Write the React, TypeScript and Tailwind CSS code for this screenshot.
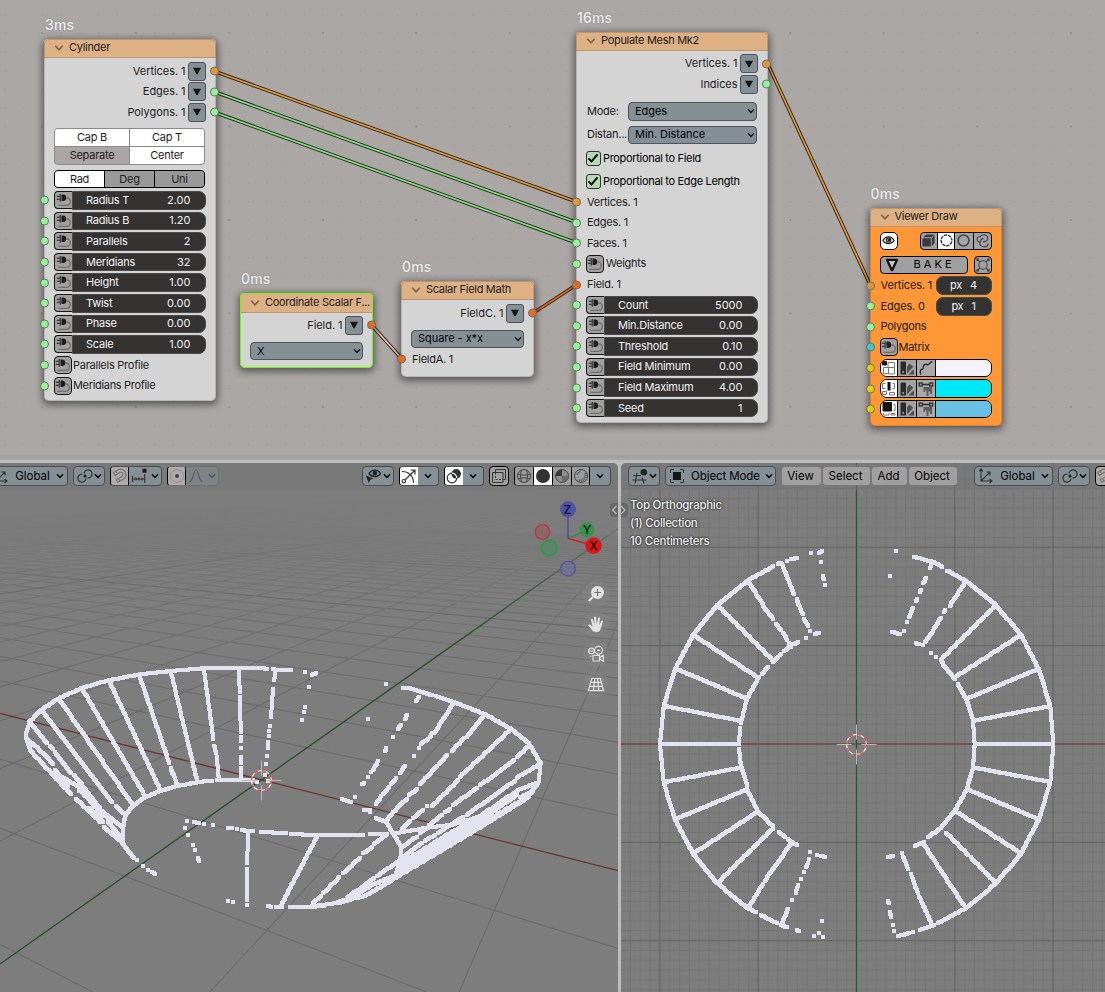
import React from "react";

type Kids = { children?: React.ReactNode };

/* ---------- shared drawings ---------- */

const Caret = ({ className = "" }: { className?: string }) => (
  <svg viewBox="0 0 8 6" className={`h-[6px] w-[8px] shrink-0 ${className}`} fill="none" stroke="currentColor" strokeWidth="1.4">
    <path d="M1 1.2 4 4.4 7 1.2" />
  </svg>
);

const PlugIcon = () => (
  <svg viewBox="0 0 16 16" className="h-[16px] w-[16px]" fill="none">
    <path d="M10.200 6h.8a3.300 3.300 0 0 1 3.300 3.700c-.2 2.300-1.800 3.600-4 3.600H2.300" stroke="#707070" strokeWidth="1.300" />
    <path d="M.8 4.300h3M.8 7.300h3" stroke="#1d1d1d" strokeWidth="1.100" />
    <path d="M4.200 2v7.600" stroke="#1d1d1d" strokeWidth="1" />
    <path d="M5.500 2.600h1.500a3.200 3.200 0 0 1 0 6.400H5.500z" fill="#1d1d1d" />
  </svg>
);

const AxesIcon = () => (
  <svg viewBox="0 0 16 16" className="h-[16px] w-[16px] shrink-0" fill="none" stroke="#333" strokeWidth="1.1">
    <path d="M3 1v12h11M3 13 12 4M1 3.5 3 1l2 2.500M11.500 11 14 13l-2.500 2M8.500 4H12v3.500" />
  </svg>
);

const PivotIcon = () => (
  <svg viewBox="0 0 16 16" className="h-[16px] w-[16px] shrink-0" fill="none" stroke="#333" strokeWidth="1.300">
    <path d="M8.900 10.600A4 4 0 1 1 5.400 6.100M7.100 5.400A4 4 0 1 1 10.600 9.900" />
    <circle cx="8" cy="8" r="1.600" fill="#1d1d1d" stroke="none" />
  </svg>
);

const MagnetIcon = () => (
  <svg viewBox="0 0 16 16" className="h-[16px] w-[16px] shrink-0" fill="none" stroke="#777" strokeWidth="1.2">
    <path d="M1.500 4.500 6 1.700c4-2 9 1.500 8 6-.8 3-4.500 5-8.500 6.500L4.300 11.300c3-1 6-2.600 6.600-4.300.5-1.800-1.200-3.200-3.200-2.500L3.300 7.300zM3.800 3.200l1.700 2.700M6.600 10.400l1.200 2.900" />
  </svg>
);

/* ---------- node pieces ---------- */

const SOCKET: Record<string, string> = {
  green: "bg-[#92f792]",
  amber: "bg-[#e6992f]",
  dullamber: "bg-[#d8953f]",
  field: "bg-[#ea6a1c]",
  cyan: "bg-[#33cccf]",
  yellow: "bg-[#e3ce06]",
};

function Socket({ kind, side }: { kind: string; side: "l" | "r" }) {
  return (
    <span
      className={`absolute top-1/2 h-[9px] w-[9px] -translate-y-1/2 rounded-full border border-[#6d6d6d] ${side === "l" ? "-left-[4px]" : "-right-[3.500px]"} ${SOCKET[kind]}`}
    />
  );
}

function Row({ children, input, output, end }: Kids & { input?: string; output?: string; end?: boolean }) {
  return (
    <div className={`relative flex h-[20.6px] shrink-0 items-center px-[10px] ${end ? "justify-end gap-[2px]" : ""}`}>
      {input && <Socket kind={input} side="l" />}
      {children}
      {output && <Socket kind={output} side="r" />}
    </div>
  );
}

function OutRow({ label, kind }: { label: string; kind: string }) {
  return (
    <Row end output={kind}>
      <span className="tracking-[-0.050px]">{label}</span>
      <span className="flex h-[19px] w-[18px] items-center justify-center rounded-[3px] border border-[#4e5357] bg-[#848f96]">
        <svg viewBox="0 0 8 8" className="h-[8px] w-[8px]"><path d="M0 .8h8L4.600 7.200H3.400z" fill="#171717" /></svg>
      </span>
    </Row>
  );
}

function PlugButton({ round = true }: { round?: boolean }) {
  return (
    <span className={`flex h-[18px] w-[18px] shrink-0 items-center justify-center border border-[#151515] bg-[#a0a0a0] ${round ? "rounded-[4px]" : "rounded-l-[4px] border-r-0"}`}>
      <PlugIcon />
    </span>
  );
}

function Field({ label, value }: { label: string; value: string }) {
  return (
    <Row input="green">
      <div className="flex h-[18.600px] w-full">
        <PlugButton round={false} />
        <div className="flex flex-1 items-center justify-between rounded-r-[7px] border border-[#4b4b4b] bg-[#343332] pl-[13px] pr-[14px] text-[#f2f2f2]">
          <span>{label}</span>
          <span className="tracking-normal">{value}</span>
        </div>
      </div>
    </Row>
  );
}

function Select({ children, className = "" }: Kids & { className?: string }) {
  return (
    <div className={`flex h-[18.500px] items-center justify-between rounded-[4px] border border-[#4e5357] bg-[#848f96] pl-[6px] pr-[1px] tracking-[-0.050px] text-black ${className}`}>
      <span>{children}</span>
      <Caret className="text-[#151515]" />
    </div>
  );
}

function Node({ title, time, place, children, orange, selected }: Kids & { title: string; time: string; place: string; orange?: boolean; selected?: boolean }) {
  return (
    <div className={`absolute flex flex-col ${place}`}>
      <div className={`h-[23px] shrink-0 pl-[1px] text-[14px] leading-[18px] font-medium tracking-[0.150px] text-[#ececec] [text-shadow:0_0_2px_#888]`}>{time}</div>
      <div className={`flex flex-1 flex-col rounded-[5px] shadow-[0_2px_7px_2px_rgba(0,0,0,0.45)] ${orange ? "bg-[#ff9736]" : "bg-[#d4d4d4]"} ${selected ? "outline-[1.500px] -outline-offset-1 outline-[#66ff00]" : "outline-1 -outline-offset-1 outline-black/15"}`}>
        <div className={`flex shrink-0 items-center gap-[5px] rounded-t-[4px] border-b border-black/15 bg-[#deb185] pl-[10px] text-[#1c1c1c] ${selected ? "h-[20px]" : "h-[19px]"}`}>
          <Caret className="h-[8px] w-[10px] text-[#7b634c]" />
          <span className="pb-[1px] tracking-[-0.300px] whitespace-nowrap">{title}</span>
        </div>
        {children}
      </div>
    </div>
  );
}

function Check({ children }: Kids) {
  return (
    <div className="flex h-[15px] items-center gap-[2.500px] px-[9.500px] text-black">
      <span className="flex h-[15px] w-[15px] items-center justify-center rounded-[3px] border border-[#2d332d] bg-[#b3dbb3]">
        <svg viewBox="0 0 12 12" className="h-[12px] w-[12px]" fill="none" stroke="#000" strokeWidth="1.900"><path d="M1.500 6.300 4.600 9.400 10.500 2.300" /></svg>
      </span>
      <span className="tracking-[-0.320px]">{children}</span>
    </div>
  );
}

const PaletteIcon = () => (
  <svg viewBox="0 0 16 16" className="h-[16px] w-[16px] shrink-0" fill="#2b2b2b">
    <path d="M2.500 1.500h3.500a1 1 0 0 1 1 1v12H1.500v-12a1 1 0 0 1 1-1z" />
    <path d="M8 6.500 10.500 3.500l3.800 3.200L8 13.500zM9.500 14.500l4.700-4.700h.8v4.700z" fill="#505050" />
    <circle cx="4.200" cy="12" r="1" fill="#a3a3a3" />
  </svg>
);
const CurveIcon = () => (
  <svg viewBox="0 0 16 16" className="h-[16px] w-[16px] shrink-0" fill="none" stroke="#2b2b2b" strokeWidth="1.400">
    <path d="M2.200 14.500c1.200-1.500-.8-2.200.3-4S5 9.800 5.200 8s-.4-2.700 1.600-3.500 2.200.8 3.700 0S12 2.300 14.500 1.500" />
  </svg>
);
const PolyIcon = () => (
  <svg viewBox="0 0 16 16" className="h-[16px] w-[16px] shrink-0" fill="none" stroke="#2b2b2b" strokeWidth="1.300">
    <path d="M5.500 6h8.500v7h-2v-2.500h-1.500V15H8.500V9.500H7V11H5.500z" fill="#5c5c5c" stroke="none" />
    <path d="M4 3.500h8" />
    <rect x="1.200" y="2" width="3" height="3" fill="#aaa" /><rect x="11.700" y="2" width="3" height="3" fill="#aaa" />
  </svg>
);

function ColorRow({ first, last, color }: { first: React.ReactNode; last: React.ReactNode; color: string }) {
  return (
    <Row input="yellow">
      <div className="flex h-[18.500px] w-full overflow-hidden rounded-[7px] border border-black">
        <span className="flex w-[16px] items-center justify-center bg-white">{first}</span>
        <span className="flex w-[19px] items-center justify-center border-l border-black bg-[#a3a3a3]"><PaletteIcon /></span>
        <span className="flex w-[19px] items-center justify-center border-l border-black bg-[#a9a9a9]">{last}</span>
        <span className={`flex-1 border-l border-black ${color}`} />
      </div>
    </Row>
  );
}

/* ---------- point clouds ---------- */

/* Strokes are separated by ";" and given in thirds of a pixel. */
function cloud(src: string, ox: number, oy: number): string {
  const seen = new Set<string>();
  src.split(";").forEach((stroke) => {
    const pts = stroke.trim().split(/\s+/).filter(Boolean).map((p) => p.split(",").map(Number));
    if (!pts.length) return;
    const put = (x: number, y: number) => seen.add(`M${Math.round(ox + x / 3) - 2} ${Math.round(oy + y / 3) - 2}h4v4h-4z`);
    put(pts[0][0], pts[0][1]);
    for (let i = 1; i < pts.length; i++) {
      const [ax, ay] = pts[i - 1];
      const [bx, by] = pts[i];
      const n = Math.max(1, Math.ceil(Math.hypot(bx - ax, by - ay) / 5));
      for (let k = 1; k <= n; k++) put(ax + ((bx - ax) * k) / n, ay + ((by - ay) * k) / n);
    }
  });
  return [...seen].join("");
}

const TOP_VIEW = `460,109 382,152 292,226 219,315 165,417 131,528 120,643 131,758 165,869 219,971 292,1060 382,1134 408,1147;422,1155 470,1179;484,1186 500,1191;531,1200 537,1203;582,1217;597,1209;609,1220;606,1173;
473,101 484,98;502,93;513,88 530,84;573,69;597,69 606,63;603,96;609,138 611,147;615,165;
120,643 357,643;135,528 363,573;170,417 381,506;222,316 414,443;294,228 460,392;385,155 428,222;430,228 460,266;468,283 483,299;489,309 502,329;506,338 514,350;
535,337 520,343;508,352 493,363;482,373 458,397;443,410 426,432;417,441 381,506 363,578;360,593 357,643;357,657 363,709 381,766;381,778 414,845 458,888 458,896;478,907 494,920;503,928 516,937 530,945;558,323;570,302;584,312 596,309;
484,98 522,192;530,207 548,253;553,268 565,289;
135,756 361,713;170,866 381,778;222,969 414,845;295,1056 458,896;386,1132 428,1063;434,1053 516,937;570,966;568,987;563,1000 558,1012;552,1026;543,1047;534,1064 528,1088;516,1111;504,1137 484,1184;591,974;604,977 615,981;
882,80 946,98 966,111;982,122 1038,153 1128,226 1203,315 1256,417 1291,528 1300,643 1291,758 1256,869 1203,971 1128,1060 1038,1134 954,1179;942,1186 900,1199;879,1206;868,1209 834,1218;822,1203;819,1185;813,1160 809,1145;806,1120 803,1114;828,63;810,138;
935,100 930,114;918,143 910,160;902,180 900,187;892,207 888,213;879,234 868,262;861,276;852,302;840,312 816,305;
1036,156 989,228;975,240 973,246;962,263 943,295;938,304 915,336;909,345;896,342 888,339;933,369;948,381;
1125,228 962,389;1200,317 1006,441;1252,418 1044,504;1286,529 1063,572;1300,643 1064,643;1286,755 1063,713;1252,866 1044,779;1200,968 1009,845;1125,1057 1052,982;1045,975 978,908;1034,1130 909,940;936,1184 898,1100;893,1088 876,1042;873,1032;864,1016 849,980;846,969;819,977 805,982;
964,389 970,404 1006,447;1013,461 1040,510 1059,572 1064,643 1059,713 1040,779 1003,845 962,893 925,922;912,936 884,948`;

const PERSP_LEFT = `800,86 770,84 612,85 512,93 420,103 326,121 248,143 175,176 120,212 88,246 77,288 92,333;819,86 830,90;843,90;856,90 873,90;915,96;936,105 948,99;927,141;915,201;912,216;906,240;
612,90 640,297;643,317 648,340;650,350 656,415;716,92 718,132;720,141 720,156;720,170;720,183 720,237;723,249 723,264;723,277;723,290 723,302;723,324;723,350 723,370;723,384 723,407;
825,90 823,120;819,147 815,204;814,215 812,232;810,257;807,273;807,288;803,307 803,325;801,348;798,372;795,405;
512,93 592,425;418,106 508,370;513,384 518,402;520,400 532,436;328,124 482,452;248,148 435,468;178,178 395,490;125,212 337,487;347,497 377,525;90,246 140,310;150,318 160,328;166,337 214,400;222,406 246,432;250,440 300,505;305,512 370,565;
84,300 128,338 158,372;92,333 213,463;165,390 205,437;172,403 236,440;238,452 262,460;228,476 300,545;250,460 285,500;290,510 325,535;270,505 310,545;311,562 358,600;325,545 370,600;
602,425 636,423;652,420 760,420;770,425;803,422;602,425 532,438 484,452 435,472 395,500 376,527 368,570 370,602;350,585 402,655;411,660;429,678;444,690;457,697 465,703;
561,543;555,564;564,585;579,615;585,630;593,653 597,663;582,546 597,549;612,552;639,555;684,564 696,564;711,567;726,571 760,573;782,576 858,579;874,582 906,582;908,585 952,586;963,585 978,585;
744,575 744,630;741,640 741,670;741,688 741,780;741,795;952,588 840,802;684,783;699,786;803,798 812,800;828,801 845,801;870,801 903,801;915,801 940,799 990,792`;

const PERSP_RIGHT = `258,372;204,477;310,384 325,384 396,406;408,409 462,426 555,463 630,505 686,549 722,610 715,668 680,715;357,411 348,423;321,465 315,477;303,495 293,508;279,531;258,564 255,573;234,604 219,631;213,636;204,651;192,670 186,673;165,711;
126,718 153,727;193,750 210,750 211,756;228,774 258,786 303,858 303,885 288,945;
462,428 402,520;396,520 390,531;385,537 363,551;358,565;342,587;315,617 300,638;288,655 273,673;267,682 250,702;244,709 228,731;
553,466 500,530;492,533 456,573;442,585 360,673;352,686 328,706;320,716 285,752;278,757 258,783;
630,510 545,590 480,650;475,660 430,705;424,712 395,737;380,739;368,751 340,775;330,782 305,808;
686,558 650,592;643,601 540,676;530,685 460,734;450,748 436,756;425,766 388,796;380,803 360,820;350,830 305,862;
715,615 650,653;645,662 500,765;490,770 415,818;405,825 375,842;365,850 305,893;
712,668 655,690 545,765 435,828 300,912;650,705 545,778 435,842 300,925;690,700 670,718 560,782 440,852 300,935;680,715 560,790 440,862 300,945 235,985 195,1008 165,1015;
712,676 690,698 660,712;
40,825 80,825;92,825 190,825;210,822 262,822;282,820 390,802 450,795 545,768;
258,825 222,852;216,861 190,880;180,893 130,940;118,952 70,1000;62,1008 40,1030;300,900 232,948;222,955 140,1014;288,945 215,975 150,1015 115,1025;
0,1041 30,1041 75,1036;88,1032 125,1027 155,1018`;

const VPX = [-885, 488];
const VPY = [676, 488];

function Cursor({ x, y }: { x: number; y: number }) {
  return (
    <g fill="none">
      <path d={`M${x} ${y - 20}v15m0 10v15M${x - 20} ${y}h15m10 0h15`} stroke="#b9b9b9" strokeWidth="1" />
      <circle cx={x} cy={y} r="10" stroke="#f4f4f4" strokeWidth="1.200" />
      <circle cx={x} cy={y} r="10" stroke="#f23b34" strokeWidth="1.200" strokeDasharray="3.930 3.930" />
    </g>
  );
}

function PerspectiveScene() {
  const xs = Array.from({ length: 46 }, (_, i) => i - 4);
  const ys = Array.from({ length: 70 }, (_, i) => i - 44);
  return (
    <svg viewBox="0 463 618 529" className="absolute inset-0 h-full w-full">
      <defs>
        <linearGradient id="fade" x1="0" y1="490" x2="0" y2="700" gradientUnits="userSpaceOnUse">
          <stop offset="0" stopColor="#fff" stopOpacity="0" />
          <stop offset="0.2" stopColor="#fff" stopOpacity="0.120" />
          <stop offset="0.5" stopColor="#fff" stopOpacity="0.500" />
          <stop offset="1" stopColor="#fff" stopOpacity="0.900" />
        </linearGradient>
        <linearGradient id="axisfade" x1="0" y1="490" x2="0" y2="640" gradientUnits="userSpaceOnUse">
          <stop offset="0" stopColor="#fff" stopOpacity="0" />
          <stop offset="1" stopColor="#fff" stopOpacity="1" />
        </linearGradient>
        <mask id="far" maskUnits="userSpaceOnUse" x="0" y="463" width="618" height="529">
          <rect x="0" y="463" width="618" height="529" fill="url(#fade)" />
        </mask>
        <mask id="axes" maskUnits="userSpaceOnUse" x="0" y="463" width="618" height="529">
          <rect x="0" y="463" width="618" height="529" fill="url(#axisfade)" />
        </mask>
      </defs>
      <g mask="url(#far)" fill="none">
        {xs.filter((m) => m !== 0).map((m) => (
          <path key={`x${m}`} d={`M${VPX[0]} ${VPX[1]}L${1094.700 + 334 * m} 992`} stroke={m % 10 === 0 ? "#5c5c5c" : "#6a6a6a"} strokeWidth="1.200" />
        ))}
        {ys.filter((n) => n !== 0).map((n) => (
          <path key={`y${n}`} d={`M${VPY[0]} ${VPY[1]}L${-39.500 + 249.300 * n} 992`} stroke={n % 10 === 0 ? "#5c5c5c" : "#6a6a6a"} strokeWidth="1.200" />
        ))}
      </g>
      <g mask="url(#axes)">
        <path d="M0 713.300 618 870.600" stroke="#6c3131" strokeWidth="1.300" />
        <path d="M0 964 618 528.700" stroke="#2b5030" strokeWidth="1.400" />
      </g>
      <path d={cloud(PERSP_LEFT, 0, 640) + cloud(PERSP_RIGHT, 300, 560)} fill="#e4e3f1" fillRule="nonzero" shapeRendering="crispEdges" />
      <Cursor x={261.500} y={780.500} />
      <g strokeWidth="1.300">
        <path d="M568 538.500v-29" stroke="#4d4fa6" strokeWidth="1.600" />
        <path d="M568 538.500 587 530" stroke="#36894a" strokeWidth="1.600" />
        <path d="M568 538.500 593 545.500" stroke="#dc1c1e" strokeWidth="1.600" />
        <circle cx="542.500" cy="532" r="7.300" fill="#8d6667" stroke="#ba3838" />
        <circle cx="549" cy="548" r="7.800" fill="#5f8467" stroke="#1ca23a" />
        <circle cx="568" cy="568.700" r="7.300" fill="#71738d" stroke="#5355a4" />
        <circle cx="568" cy="509.300" r="8" fill="#5053a5" />
        <circle cx="587" cy="529.800" r="7.500" fill="#3a914d" />
        <circle cx="593.500" cy="545.800" r="8.200" fill="#dc1517" />
      </g>
      <g fontFamily="Inter, sans-serif" fontSize="12" fontWeight="600" textAnchor="middle">
        <text x="567.500" y="513.500" fill="#15163c">Z</text>
        <text x="587" y="534" fill="#0f3518">Y</text>
        <text x="593.500" y="550.200" fill="#2d0404">X</text>
      </g>
      <g fill="#8a8a8a" fillOpacity="0.300">
        <circle cx="596" cy="594" r="13" /><circle cx="596" cy="624" r="13" /><circle cx="596" cy="654" r="13" /><circle cx="596" cy="684.500" r="13" />
      </g>
      <g fill="none" stroke="#e2e2e2" strokeWidth="1.200">
        <circle cx="597.500" cy="592.500" r="6.500" fill="#e2e2e2" stroke="none" />
        <path d="m593 597-4.300 4" strokeWidth="2.200" />
        <path d="M597.500 589v7M594 592.500h7" stroke="#777" />
        <path d="M592.700 631c-1.300-2-3.200-3.700-4.500-5.700.9-1.300 2.200-.8 3.400.6l1 .9-1.700-7.300c.6-1.300 1.700-1 2 .1l1.600 5-.5-7.400c.6-1 1.700-1 2 0l.8 7.200 1.300-6.700c.7-.9 1.700-.6 1.800.4l-.6 7.400 2.100-4.700c.8-.6 1.600-.2 1.500.8-1 3.400-1.700 6.900-3.200 9.400-1.700 1.600-5.200 1.600-7 0z" fill="#e2e2e2" stroke="none" />
        <circle cx="591.500" cy="651" r="2.900" /><circle cx="598.500" cy="650.300" r="3.900" />
        <path d="M589 651h2.500v0h2M597 650.300h3M589.800 656.500h1.500M593 655.500h6.500v5.500H593zM603.300 655.300v6l-3.300-2.100v-1.800z" />
        <path d="M591.800 678.500h8.600l3.100 12.200h-15zM590.700 682.400h10.900M589.800 686.400h12.800M594.700 678.500l-1.300 12.200M597.600 678.500l1.200 12.200" />
      </g>
      <path d="M610 507a4 4 0 0 1 4-4h5v14h-5a4 4 0 0 1-4-4z" fill="#686868" />
      <path d="m616.500 506-4 4 4 4" fill="none" stroke="#bcbcbc" strokeWidth="1.200" />
    </svg>
  );
}

function TopScene() {
  const lines = Array.from({ length: 60 }, (_, i) => i - 30);
  return (
    <svg viewBox="621 463 484 529" className="absolute inset-0 h-full w-full">
      {lines.filter((i) => i % 10 !== 0).map((i) => (
        <path key={i} d={`M${856.500 + i * 9.830} 463V992M621 ${744 + i * 9.830}H1105`} stroke="#767676" strokeWidth="1" />
      ))}
      {[-3, -2, -1, 1, 2, 3].map((i) => (
        <path key={i} d={`M${856.500 + i * 98.300} 463V992M621 ${744 + i * 98.300}H1105`} stroke="#676767" strokeWidth="1.200" />
      ))}
      <path d="M621 744H1105" stroke="#724747" strokeWidth="1.600" />
      <path d="M856.500 463V992" stroke="#2d5434" strokeWidth="1.300" />
      <path d={cloud(TOP_VIEW, 620, 530)} fill="#e4e3f1" fillRule="nonzero" shapeRendering="crispEdges" />
      <Cursor x={856.500} y={744.500} />
      <path d="M621 503h3a4 4 0 0 1 4 4v6a4 4 0 0 1-4 4h-3z" fill="#686868" />
      <path d="m621 506 4 4-4 4" fill="none" stroke="#bcbcbc" strokeWidth="1.200" />
    </svg>
  );
}

/* ---------- viewport header pieces ---------- */

function Box({ children, className = "" }: Kids & { className?: string }) {
  return <div className={`flex h-[20px] shrink-0 items-center overflow-hidden rounded-[4px] border border-[#494e52] bg-[#848f96] ${className}`}>{children}</div>;
}
const Cell = ({ children, className = "" }: Kids & { className?: string }) => (
  <span className={`flex h-full shrink-0 items-center justify-center ${className}`}>{children}</span>
);
const Plain = ({ children, className = "" }: Kids & { className?: string }) => (
  <span className={`flex h-[18px] shrink-0 items-center justify-center rounded-[3px] bg-[#a0a0a0] pt-[1px] pr-[1px] text-black ${className}`}>{children}</span>
);

function LeftHeader() {
  return (
    <div className="relative flex h-[27px] items-start bg-[#777]/60 pt-[3px] text-[11.500px] text-black">
      <Box className="-ml-[8px] w-[76px] justify-between pr-[3px]"><AxesIcon /><span className="pt-[1px]">Global</span><Caret /></Box>
      <Box className="ml-[5px] w-[32px] justify-between pl-[3px] pr-[2px]"><PivotIcon /><Caret /></Box>
      <Box className="ml-[5px] w-[52px] !border-l-black">
        <Cell className="w-[18px] border-r border-black bg-[#b0abab]"><MagnetIcon /></Cell>
        <Cell className="flex-1 gap-[4px]">
          <svg viewBox="0 0 16 16" className="h-[16px] w-[16px]" fill="none" stroke="#333" strokeWidth="1.200"><path d="M1.500 8v6M1.500 11h12M5 9.500v3M8 9.500v3M11 9.500v3M13.700 6v9" /><path d="M11.500.8h4v4h-4z" fill="#1d1d1d" stroke="none" /></svg>
          <Caret />
        </Cell>
      </Box>
      <Box className="ml-[5px] w-[52px] !border-[#6b7073] !border-l-black !bg-[#7d8488]">
        <Cell className="w-[18px] border-r border-black bg-[#b0abab]">
          <svg viewBox="0 0 16 16" className="h-[16px] w-[16px]"><circle cx="8" cy="8" r="6.500" fill="none" stroke="#8f8b8b" /><circle cx="8" cy="8" r="2" fill="#444" /></svg>
        </Cell>
        <Cell className="flex-1 gap-[4px] text-[#4b4f52]">
          <svg viewBox="0 0 16 16" className="h-[16px] w-[16px]" fill="none" stroke="#5a5f62" strokeWidth="1.200"><path d="M1.500 14C5.500 13 5.500 2 8 2s2.500 11 6.500 12" /></svg>
          <Caret />
        </Cell>
      </Box>
      <Box className="ml-[143px] w-[32px] justify-between pl-[2px] pr-[2px]">
        <svg viewBox="0 0 16 16" className="h-[16px] w-[16px]" fill="none"><path d="M4 5.500C7 1 13 1 15.500 5.500 13 9.500 7 9.500 4 5.500z" stroke="#222" strokeWidth="1.300" /><circle cx="9.800" cy="5" r="2.300" fill="#222" /><path d="m.8 7.500 7.500 3-3 1.200-1.500 3.300z" fill="#222" /></svg>
        <Caret />
      </Box>
      <Box className="ml-[5px] w-[40px] !border-l-black">
        <Cell className="w-[18px] bg-white"><svg viewBox="0 0 16 16" className="h-[16px] w-[16px]" fill="none" stroke="#333" strokeWidth="1.200"><path d="M2.500 13.500 13.500 2.500M9.500 2h4.500v4.500M1 3.500C8 3.500 12.500 8 12.500 15" /><circle cx="2.800" cy="13.200" r="1.700" fill="#fff" /></svg></Cell>
        <Cell className="flex-1"><Caret /></Cell>
      </Box>
      <Box className="ml-[5px] w-[40px] !border-l-black">
        <Cell className="w-[18px] bg-white"><svg viewBox="0 0 16 16" className="h-[16px] w-[16px]" fill="none"><circle cx="6" cy="10" r="4.800" stroke="#333" strokeWidth="1.200" /><circle cx="10.200" cy="5.800" r="4.800" fill="#333" /><path d="M6 5.200a4.800 4.800 0 0 1 4.800 4.800" stroke="#fff" strokeWidth="1.200" /></svg></Cell>
        <Cell className="flex-1"><Caret /></Cell>
      </Box>
      <Box className="ml-[5px] w-[20px] justify-center !border-black !bg-[#a0a0a0]">
        <svg viewBox="0 0 16 16" className="h-[16px] w-[16px]" fill="none" stroke="#333"><path d="M1.500 4.500h10.500v10H1.500zM4.500 4V1.500h10v10H12" /><path d="M4.500 4.500v7H12" strokeDasharray="2 1.500" /></svg>
      </Box>
      <Box className="ml-[5px] w-[97px] !border-l-black">
        <Cell className="w-[18px] bg-[#9c9c9c]"><svg viewBox="0 0 16 16" className="h-[16px] w-[16px]" fill="none" stroke="#444"><circle cx="8" cy="8" r="6.500" /><path d="M1.500 6c4 1.500 9 1.500 13 0M2 11c4-1.500 8-1.500 12 0M5.500 2c-1.300 4-1.300 8 0 12M10.500 2c1.300 4 1.300 8 0 12" /></svg></Cell>
        <Cell className="w-[19px] border-l border-black bg-white"><svg viewBox="0 0 16 16" className="h-[16px] w-[16px]"><circle cx="8" cy="8" r="7" fill="#333" /></svg></Cell>
        <Cell className="w-[19px] border-l border-black bg-[#9c9c9c]"><svg viewBox="0 0 16 16" className="h-[16px] w-[16px]"><circle cx="8" cy="8" r="6.500" fill="#8e8e8e" stroke="#444" /><path d="M8 8V1.500A6.500 6.500 0 0 0 1.500 8z" fill="#3b3b3b" /><path d="M8 8v6.500A6.500 6.500 0 0 0 14.500 8z" fill="#6a6a6a" /></svg></Cell>
        <Cell className="w-[19px] border-x border-black bg-[#9c9c9c]"><svg viewBox="0 0 16 16" className="h-[16px] w-[16px]" fill="none" stroke="#444"><circle cx="8" cy="8" r="6.500" /><path d="M4 7c.3-2 1.500-3 3.500-3.300" /><path d="M12.500 5c1 5-3 8.500-8 7.500" strokeWidth="2.500" stroke="#555" strokeDasharray="1 .8" /></svg></Cell>
        <Cell className="flex-1"><Caret /></Cell>
      </Box>
    </div>
  );
}

function RightHeader() {
  return (
    <div className="relative flex h-[27px] items-start bg-[#777]/60 pt-[3px] text-[11.500px] text-black">
      <Box className="ml-[7px] w-[32px] justify-between pl-[3px] pr-[2px]">
        <svg viewBox="0 0 16 16" className="h-[16px] w-[16px]" fill="none" stroke="#333" strokeWidth="1.200"><path d="M1 7.500h8M.5 12h14M5 5 3 15.500M10 9.500l2 6" /><circle cx="11.800" cy="4.200" r="3.300" fill="#222" stroke="none" /></svg>
        <Caret />
      </Box>
      <Box className="ml-[5px] w-[111px] justify-between pl-[3px] pr-[2px]">
        <svg viewBox="0 0 16 16" className="h-[16px] w-[16px]" fill="none" stroke="#333"><path d="M4 4h8v8H4z" fill="#151515" stroke="none" /><path d="M1.500 5V1.500H5M11 1.500h3.500V5M14.500 11v3.500H11M5 14.500H1.500V11" /></svg>
        <span className="pt-[1px] pl-[1px] tracking-[-0.100px]">Object Mode</span><Caret />
      </Box>
      <div className="ml-[5.500px] flex gap-[2px] pt-[1px]">
        <Plain className="w-[39px]">View</Plain><Plain className="w-[47px]">Select</Plain><Plain className="w-[35px]">Add</Plain><Plain className="w-[48px]">Object</Plain>
      </div>
      <Box className="ml-[17.500px] w-[79px] justify-between pl-[3px] pr-[3px]"><AxesIcon /><span className="pt-[1px]">Global</span><Caret /></Box>
      <Box className="ml-[5px] w-[32px] justify-between pl-[3px] pr-[2px]"><PivotIcon /><Caret /></Box>
      <Box className="ml-[5px] w-[52px] !border-black !bg-[#b0abab]"><MagnetIcon /></Box>
    </div>
  );
}

/* ---------- node editor ---------- */

const LINKS: [string, string][] = [
  ["M215 71.500 577 202", "#e6992f"],
  ["M215 92 577 222.500", "#7fe87f"],
  ["M215 112.500 577 243", "#7fe87f"],
  ["M767.500 63.500 870.500 285.500", "#e6992f"],
  ["M532.500 313.500 577 284.500", "#e0621c"],
  ["M372 325.500 402 359", "#f2c3ab"],
];

function NodeCanvas() {
  return (
    <div className="relative h-[455px] shrink-0 overflow-hidden bg-[#aba7a5] text-[11px] leading-none tracking-[-0.250px] text-[#1c1c1c]">
      <svg className="absolute inset-0 h-full w-full" viewBox="0 0 1105 455">
        <defs>
          <pattern id="minor" x="4.700" y="-4.700" width="18.700" height="18.700" patternUnits="userSpaceOnUse"><rect x="0" y="0" width="1.200" height="1.200" fill="#9e9996" /></pattern>
          <pattern id="major" x="41.300" y="32" width="93.500" height="93.500" patternUnits="userSpaceOnUse"><rect width="1.800" height="1.800" fill="#918c8a" /></pattern>
        </defs>
        <rect width="1105" height="455" fill="url(#minor)" />
        <rect width="1105" height="455" fill="url(#major)" />
        {LINKS.map(([d, c]) => (
          <g key={d}><path d={d} stroke="#2f2a26" strokeWidth="3.600" /><path d={d} stroke={c} strokeWidth="1.700" /></g>
        ))}
      </svg>

      <Node title="Cylinder" time="3ms" place="left-[44px] top-[16px] h-[384.500px] w-[171.500px]">
        <div className="flex flex-col pt-[3px]">
          <OutRow label="Vertices. 1" kind="amber" /><OutRow label="Edges. 1" kind="green" /><OutRow label="Polygons. 1" kind="green" />
          <div className="mx-[10px] mt-[5.200px] grid h-[37.500px] w-[151px] grid-cols-2 grid-rows-2 gap-px overflow-hidden rounded-[4px] border border-[#8a8a8a] bg-[#8a8a8a] text-center leading-[17px]">
            <span className="bg-white">Cap B</span><span className="bg-white">Cap T</span><span className="bg-[#aba5a5]">Separate</span><span className="bg-white">Center</span>
          </div>
          <div className="mx-[10px] mt-[5px] mb-[1.500px] grid h-[18px] w-[151px] grid-cols-3 gap-px overflow-hidden rounded-[4px] border border-black bg-black text-center leading-[16px]">
            <span className="bg-white">Rad</span><span className="bg-[#999]">Deg</span><span className="bg-[#999]">Uni</span>
          </div>
          <Field label="Radius T" value="2.00" /><Field label="Radius B" value="1.20" /><Field label="Parallels" value="2" /><Field label="Meridians" value="32" />
          <Field label="Height" value="1.00" /><Field label="Twist" value="0.00" /><Field label="Phase" value="0.00" /><Field label="Scale" value="1.00" />
          <Row input="green"><PlugButton /><span className="ml-px">Parallels Profile</span></Row>
          <Row input="green"><PlugButton /><span className="ml-px tracking-[-0.320px]">Meridians Profile</span></Row>
        </div>
      </Node>

      <Node title="Coordinate Scalar F..." time="0ms" place="left-[240px] top-[270px] h-[98px] w-[132.500px]" selected>
        <div className="flex flex-col pt-[2px]">
          <OutRow label="Field. 1" kind="field" />
          <Select className="mx-[10px] mt-[6.500px] !h-[18px]">X</Select>
        </div>
      </Node>

      <Node title="Scalar Field Math" time="0ms" place="left-[401px] top-[258px] h-[118.500px] w-[132.500px]">
        <div className="flex flex-col pt-[3px]">
          <OutRow label="FieldC. 1" kind="field" />
          <Select className="mx-[10px] mt-[6px] mb-[.8px]">Square - x*x</Select>
          <Row input="field"><span className="ml-px">FieldA. 1</span></Row>
        </div>
      </Node>

      <Node title="Populate Mesh Mk2" time="16ms" place="left-[576px] top-[9px] h-[413.500px] w-[191.500px]">
        <div className="flex flex-col pt-[2.500px]">
          <OutRow label="Vertices. 1" kind="amber" /><OutRow label="Indices" kind="green" />
          <div className="mt-[7.500px] flex items-center pl-[11px]"><span className="w-[41px]">Mode:</span><Select className="w-[129px]">Edges</Select></div>
          <div className="mt-[5px] flex items-center pl-[11px]"><span className="w-[41px]">Distan...</span><Select className="w-[129px]">Min. Distance</Select></div>
          <div className="my-[6.500px] flex flex-col gap-[8px]"><Check>Proportional to Field</Check><Check>Proportional to Edge Length</Check></div>
          <div className="-mt-[3.300px] flex flex-col">
            <Row input="amber"><span className="ml-px">Vertices. 1</span></Row><Row input="green"><span className="ml-px">Edges. 1</span></Row><Row input="green"><span className="ml-px">Faces. 1</span></Row>
            <Row input="green"><PlugButton /><span className="ml-[2px]">Weights</span></Row>
            <Row input="field"><span className="ml-px">Field. 1</span></Row>
            <Field label="Count" value="5000" /><Field label="Min.Distance" value="0.00" /><Field label="Threshold" value="0.10" /><Field label="Field Minimum" value="0.00" /><Field label="Field Maximum" value="4.00" /><Field label="Seed" value="1" />
          </div>
        </div>
      </Node>

      <Node title="Viewer Draw" time="0ms" place="left-[869.500px] top-[184.500px] h-[241px] w-[132px]" orange>
        <div className="flex flex-col pt-[5px]">
          <div className="flex justify-between px-[10px]">
            <span className="flex h-[18.500px] w-[18px] items-center justify-center rounded-[5px] border border-black bg-white">
              <svg viewBox="0 0 16 16" className="h-[15px] w-[15px]" fill="none" stroke="#222" strokeWidth="1.300"><path d="M2 8c3-5.300 9-5.300 12 0-3 4.500-9 4.500-12 0z" /><circle cx="8" cy="7.500" r="2.300" /><circle cx="8.300" cy="7.500" r=".8" fill="#222" /></svg>
            </span>
            <div className="flex h-[18.500px] w-[72px] overflow-hidden rounded-[4px] border border-black bg-[#a3a3a3]">
              <span className="flex w-[17px] items-center justify-center"><svg viewBox="0 0 16 16" className="h-[15px] w-[15px]" fill="#3a3a3a"><path d="M1.500 5.500h9v9h-9zM2.500 4.500l3-3h9l-3 3zM11.500 5.500l3-3V11l-3 3z" /></svg></span>
              <span className="flex w-[18px] items-center justify-center border-x border-black bg-white"><svg viewBox="0 0 16 16" className="h-[15px] w-[15px] shrink-0" fill="none" stroke="#333" strokeWidth="1.500"><circle cx="8" cy="8" r="5.800" /><circle cx="8" cy="8" r="5.800" stroke="#fff" strokeDasharray="1 3.555" strokeWidth="2.500" /></svg></span>
              <span className="flex w-[18px] items-center justify-center"><svg viewBox="0 0 16 16" className="h-[15px] w-[15px]" fill="none" stroke="#444" strokeWidth="1.700"><circle cx="8" cy="8" r="5.800" /></svg></span>
              <span className="flex w-[18px] items-center justify-center border-l border-black"><svg viewBox="0 0 16 16" className="h-[15px] w-[15px]" fill="none" stroke="#444" strokeWidth="1.200"><path d="M6 9.500H4a3 3 0 0 1 0-5.500h1.500C7 1 12.500 1 13.500 4.500S11 9.500 8.500 9.500M6 9.500c0-2.500 1-3.500 3-3.500M6.500 13.500c3 2.500 8 1 7.500-2.500M6.500 13.500c-1.500 0-2-2.500-.5-4" /></svg></span>
            </div>
          </div>
          <div className="mt-[5.500px] flex justify-between px-[10px]">
            <span className="flex h-[18px] w-[88px] items-center rounded-[4px] border border-black bg-[#a0a0a0] pl-[4px] text-black">
              <svg viewBox="0 0 14 14" className="h-[14px] w-[14px]"><path d="M2 1.800h10L7.300 12H6.700z" fill="#eee" fillOpacity=".5" stroke="#111" strokeWidth="2.300" strokeLinejoin="round" /></svg>
              <span className="ml-[15px] tracking-[3.100px]">BAKE</span>
            </span>
            <span className="flex h-[18px] w-[18px] items-center justify-center rounded-[4px] border border-black bg-[#a0a0a0]">
              <svg viewBox="0 0 16 16" className="h-[16px] w-[16px]" fill="none" stroke="#444" strokeWidth="1.100"><circle cx="8" cy="8" r="4.200" /><path d="m1.500 1.500 3.500 3.500M14.500 1.500 11 5M1.500 14.500 5 11M14.500 14.500 11 11M2 4V2h2M12 2h2v2M2 12v2h2M12 14h2v-2" /></svg>
            </span>
          </div>
          <div className="mt-[1.800px] flex flex-col">
            {[["Vertices. 1", "4", "dullamber"], ["Edges. 0", "1", "green"]].map(([l, v, k]) => (
              <Row key={l} input={k}>
                <span className="ml-px flex-1 whitespace-nowrap tracking-[-0.150px]">{l}</span>
                <span className="flex h-[19px] w-[56px] items-center justify-center gap-[8px] rounded-[7px] border border-[#4b4b4b] bg-[#343332] text-[#f2f2f2]"><span>px</span><span>{v}</span></span>
              </Row>
            ))}
            <Row input="green"><span className="ml-px">Polygons</span></Row>
            <Row input="cyan"><PlugButton /><span className="ml-px">Matrix</span></Row>
            <ColorRow color="bg-[#f3f2fa]" last={<CurveIcon />} first={<svg viewBox="0 0 16 16" className="h-[16px] w-[16px] shrink-0" fill="none" stroke="#777"><path d="M7 2.500h6.500v5H7zM7.500 7.500v6.500h6V7.500M2.500 7.500h5M2.500 7.500v6h5" /><path d="M1.500 1.500h4V5h-4z" fill="#111" stroke="#111" /></svg>} />
            <ColorRow color="bg-[#00e7f6]" last={<PolyIcon />} first={<svg viewBox="0 0 16 16" className="h-[16px] w-[16px] shrink-0" fill="none" stroke="#777"><path d="M6.500 1h3v8.500h-3z" fill="#111" stroke="none" /><path d="M4.500 2.500h-3v5h3M11.500 2.500h2v5h-2M5.500 10.500h-4v3h4zM8.500 11.500h5v2.500h-5z" /></svg>} />
            <ColorRow color="bg-[#69c0e7]" last={<PolyIcon />} first={<svg viewBox="0 0 16 16" className="h-[16px] w-[16px] shrink-0" fill="none" stroke="#777"><path d="M2 1.500h8.500V10H2z" fill="#111" stroke="#111" /><path d="M12.500 3.500H14v6h-1.500M2.500 12v2H8v-2M10 12.500h4V14h-4z" /></svg>} />
          </div>
        </div>
      </Node>
    </div>
  );
}

export default function App() {
  return (
    <div className="flex h-[992px] w-[1105px] flex-col overflow-hidden bg-[#bebdbd] font-['Inter',sans-serif]">
      <NodeCanvas />
      <div className="h-[3px] shrink-0 bg-[#a5a09e]" />
      <div className="h-[2px] shrink-0 bg-[#aba7a5]" />
      <div className="mt-[3px] flex flex-1 gap-[3px]">
        <section className="relative w-[618px] shrink-0 overflow-hidden rounded-tr-[5px] bg-[#7d7d7d]">
          <PerspectiveScene />
          <LeftHeader />
        </section>
        <section className="relative w-[484px] shrink-0 overflow-hidden rounded-tl-[5px] bg-[#7d7d7d]">
          <TopScene />
          <RightHeader />
          <div className="relative pt-[6px] pl-[9px] text-[11.500px] leading-[18px] font-medium tracking-[-0.300px] text-[#f0f0f0] [text-shadow:0_0_2px_#222,0_0_2px_#222]">
            <div>Top Orthographic</div><div>(1) Collection</div><div className="tracking-[-0.200px]">10 Centimeters</div>
          </div>
        </section>
      </div>
    </div>
  );
}
